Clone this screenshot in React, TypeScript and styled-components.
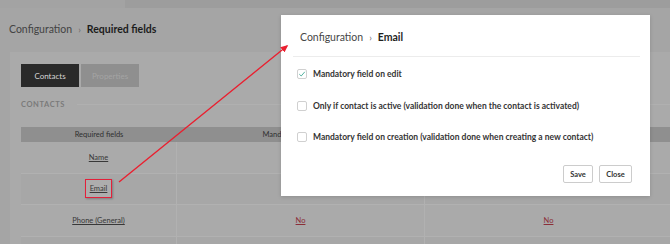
import styled, { createGlobalStyle } from "styled-components";

const GlobalStyle = createGlobalStyle`
  html, body {
    margin: 0;
    padding: 0;
    background: #a5a5a5;
    font-family: Lato, "Open Sans", sans-serif;
    overflow: hidden;
  }
`;

interface Row {
  label: string;
  onEdit: string;
  active: string;
}

const rows: Row[] = [
  { label: "Name", onEdit: "", active: "" },
  { label: "Email", onEdit: "", active: "" },
  { label: "Phone (General)", onEdit: "No", active: "No" },
];

const options = [
  { label: "Mandatory field on edit", checked: true },
  {
    label:
      "Only if contact is active (validation done when the contact is activated)",
    checked: false,
  },
  {
    label:
      "Mandatory field on creation (validation done when creating a new contact)",
    checked: false,
  },
];

// columns hidden behind the dialog keep an empty header
const headers = ["Required fields", "Mandatory field on edit", "", ""];

const App = () => {
  return (
    <Page>
      <GlobalStyle />
      <TopBar>
        <TopBarLeft />
      </TopBar>
      <PageCrumbs>
        <span className="muted">Configuration</span>
        <span className="sep">›</span>
        <strong>Required fields</strong>
      </PageCrumbs>
      <Panel>
        <Tabs>
          <Tab $active>Contacts</Tab>
          <Tab>Properties</Tab>
        </Tabs>
        <SectionTitle>
          <span>Contacts</span>
        </SectionTitle>
        <Table>
          {headers.map((h, i) => (
            <HeadCell key={i}>{h}</HeadCell>
          ))}
          {rows.map((row, i) => (
            <RowGroup key={row.label} $odd={i % 2 === 1}>
              <Cell>
                <FieldLink $marked={row.label === "Email"}>{row.label}</FieldLink>
              </Cell>
              <Cell>{row.onEdit && <NoLink>{row.onEdit}</NoLink>}</Cell>
              <Cell>{row.active && <NoLink>{row.active}</NoLink>}</Cell>
              <Cell />
            </RowGroup>
          ))}
          <RowGroup $odd>
            <Cell />
            <Cell />
            <Cell />
            <Cell />
          </RowGroup>
        </Table>
      </Panel>

      <Modal>
        <ModalHeader>
          <Crumbs>
            <span className="muted">Configuration</span>
            <span className="sep">›</span>
            <strong>Email</strong>
          </Crumbs>
        </ModalHeader>
        <CheckList>
          {options.map((opt) => (
            <CheckRow key={opt.label}>
              <Box>
                {opt.checked && (
                  <svg width="8" height="8" viewBox="0 0 8 8">
                    <polyline
                      points="1.3,4.2 3.2,6 6.8,1.8"
                      fill="none"
                      stroke="#55b3a2"
                      strokeWidth="1"
                    />
                  </svg>
                )}
              </Box>
              <span>{opt.label}</span>
            </CheckRow>
          ))}
        </CheckList>
        <Actions>
          <Button $w={30}>Save</Button>
          <Button $w={33}>Close</Button>
        </Actions>
      </Modal>

      <Arrow width="670" height="244" viewBox="0 0 670 244">
        <defs>
          <marker
            id="head"
            markerWidth="8"
            markerHeight="8"
            refX="6"
            refY="4"
            orient="auto"
            markerUnits="userSpaceOnUse"
          >
            <path d="M0,0.6 L7.5,4 L0,7.4 Z" fill="#ea1f2f" />
          </marker>
        </defs>
        <line
          x1="119"
          y1="182"
          x2="287"
          y2="46"
          stroke="#ea1f2f"
          strokeWidth="1.4"
          markerEnd="url(#head)"
        />
      </Arrow>
    </Page>
  );
};

const Page = styled.div`
  position: relative;
  width: 670px;
  height: 244px;
  overflow: hidden;
  background: #a5a5a5;
`;

const TopBar = styled.div`
  height: 8px;
  background: #9d9d9d;
  display: flex;
`;

const TopBarLeft = styled.div`
  width: 125px;
  background: #a3a3a3;
`;

const Crumbs = styled.div`
  display: flex;
  align-items: baseline;
  gap: 4px;
  font-size: 10.5px;
  line-height: 16px;
  color: #1f1f1f;
  .muted {
    color: #474747;
  }
  .sep {
    color: #6a6a6a;
    font-size: 9.5px;
    padding: 0 2px;
  }
  strong {
    font-weight: 700;
  }
`;

const PageCrumbs = styled(Crumbs)`
  padding: 13px 0 14px 9px;
  color: #1c1c1c;
  .muted {
    color: #434343;
  }
`;

const Panel = styled.div`
  margin-left: 10px;
  width: 1200px;
  height: 300px;
  background: #aaaaaa;
  padding: 12px 11px;
`;

const Tabs = styled.div`
  display: flex;
  gap: 2px;
`;

const Tab = styled.div<{ $active?: boolean }>`
  width: 58px;
  height: 23px;
  display: flex;
  align-items: center;
  justify-content: center;
  font-size: 8px;
  background: ${(p) => (p.$active ? "#2a2a2a" : "#8f8f8f")};
  color: ${(p) => (p.$active ? "#d6d6d6" : "#a4a4a4")};
`;

const SectionTitle = styled.div`
  display: flex;
  align-items: center;
  gap: 12px;
  margin-top: 12px;
  height: 10px;
  font-size: 7.5px;
  font-weight: 700;
  letter-spacing: 0.6px;
  text-transform: uppercase;
  color: #7a7a7a;
  &::after {
    content: "";
    flex: 1;
    height: 1px;
    background: #b0b0b0;
  }
`;

const Table = styled.div`
  margin-top: 18px;
  display: grid;
  grid-template-columns: 156px 248px 248px 248px;
  width: 900px;
`;

const HeadCell = styled.div`
  height: 15px;
  background: #8f8f8f;
  color: #303030;
  font-size: 7.5px;
  display: flex;
  align-items: center;
  justify-content: center;
  white-space: nowrap;
`;

const RowGroup = styled.div<{ $odd?: boolean }>`
  display: contents;
  & > div {
    background: ${(p) => (p.$odd ? "#a7a7a7" : "#aaaaaa")};
  }
`;

const Cell = styled.div`
  height: 30.5px;
  display: flex;
  align-items: center;
  justify-content: center;
  border-bottom: 1px solid #b1b1b1;
  border-right: 1px solid #b1b1b1;
`;

const FieldLink = styled.span<{ $marked?: boolean }>`
  font-size: 7.5px;
  color: #383838;
  text-decoration: underline;
  padding: ${(p) => (p.$marked ? "4px 4px" : "0")};
  border: ${(p) => (p.$marked ? "1.5px solid #e3203a" : "none")};
  background: ${(p) => (p.$marked ? "#adadad" : "transparent")};
  box-shadow: ${(p) => (p.$marked ? "1px 1px 2px rgba(0,0,0,0.25)" : "none")};
`;

const NoLink = styled.span`
  font-size: 7.5px;
  color: #8a2f38;
  text-decoration: underline;
`;

const Modal = styled.div`
  position: absolute;
  left: 281px;
  top: 15px;
  width: 369px;
  height: 181px;
  box-sizing: border-box;
  background: #fff;
  padding: 0 10px 13px 12px;
  display: flex;
  flex-direction: column;
  box-shadow: 0 1px 4px rgba(0, 0, 0, 0.15);
`;

const ModalHeader = styled.div`
  padding: 14px 0 10px 7px;
  border-bottom: 1px solid #ececec;
`;

const CheckList = styled.div`
  display: flex;
  flex-direction: column;
  gap: 21px;
  padding: 12px 0 0 4px;
  flex: 1;
`;

const CheckRow = styled.label`
  display: flex;
  align-items: center;
  gap: 6px;
  height: 10.5px;
  font-size: 8.5px;
  font-weight: 700;
  color: #353535;
`;

const Box = styled.span`
  width: 10px;
  height: 10px;
  box-sizing: border-box;
  border: 1px solid #d0d0d0;
  border-radius: 2px;
  display: flex;
  align-items: center;
  justify-content: center;
`;

const Actions = styled.div`
  display: flex;
  justify-content: flex-end;
  gap: 6px;
  padding-right: 8px;
`;

const Button = styled.button<{ $w: number }>`
  width: ${(p) => p.$w}px;
  height: 18px;
  padding: 0;
  border: 1px solid #cccccc;
  border-radius: 2px;
  background: #fff;
  font-family: Lato, sans-serif;
  font-size: 7.5px;
  font-weight: 700;
  color: #333;
`;

const Arrow = styled.svg`
  position: absolute;
  left: 0;
  top: 0;
  pointer-events: none;
`;

export default App;
